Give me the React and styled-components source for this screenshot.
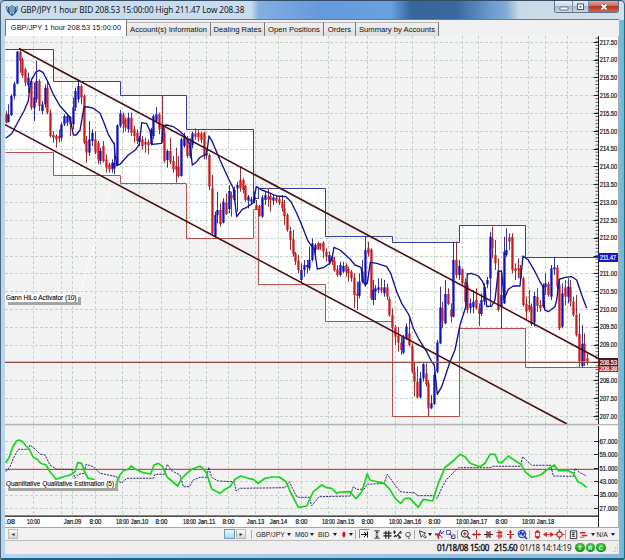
import React from "react";
import styled, { createGlobalStyle } from "styled-components";

// Candle groups. Values are thirds of a pixel from the group origin:
// b/r (up/down), high, body top, body bottom, low
const CANDLES = [
  {
    x: 5.7, y: 36,
    rows: `r 225 235 260 262,b 205 235 258 260,b 175 180 237 240,b 137 143 180 190,b 45 47 143 145,r 37 47 75 110,r 65 70 118 125,r 95 100 140 150,b 110 125 148 170,r 130 135 215 222,b 140 185 215 255,b 75 135 190 200,r 130 135 210 225,b 195 205 225 235,b 145 155 205 215,r 135 155 230 235,r 220 230 300 305,r 285 297 305 320,r 295 300 310 335,r 280 300 308 320,b 260 265 305 315,b 235 240 265 270,b 235 240 260 270,r 240 243 265 300,b 185 215 265 280,b 155 165 215 225,b 130 150 190 200,r 145 150 185 205,r 175 180 320 325,r 300 315 350 380,b 255 310 350 360,b 280 290 315 330,r 285 310 350 355,r 315 320 370 385,b 335 345 375 385,r 315 330 375 380,r 355 370 395 410,r 380 385 400 410,b 370 380 400 410,b 320 380 397 415,b 265 268 387 390,b 222 232 270 275,r 230 235 265 290,r 245 250 275 285,b 230 245 280 290,r 230 245 290 300,r 270 280 300 320,r 280 290 315 325,b 300 305 318 330,r 300 310 330 340,r 305 318 326 350,r 310 318 328 355,b 275 280 325 328,b 235 240 300 310,b 213 235 255 262,r 230 235 280 295,r 180 265 315 320,r 275 290 375 380,b 340 345 372 395,r 305 345 378 385,r 360 375 400 410,r 335 390 402 440,r 360 392 420 425,b 305 310 420 422,b 290 300 330 335,r 300 308 360 365`,
  },
  {
    x: 189.6, y: 100,
    rows: `b 115 135 168 175,b 95 100 135 145,r 85 100 110 118,r 88 98 112 125,r 95 100 120 130,r 95 97 165 178,b 150 160 167 178,r 160 165 260 270,r 225 265 400 405,b 335 345 408 415,b 275 330 345 370,r 310 330 372 380,b 295 305 368 370,r 280 308 342 345,b 255 273 327 340,r 275 285 295 350,b 260 270 300 305,b 245 255 265 335,r 200 240 265 275,r 235 240 270 280,r 255 258 300 305,b 285 290 302 325,b 290 298 305 315,b 275 290 302 310,r 300 315 328 330,r 315 318 348 350,b 285 292 350 353,b 275 285 300 315,r 265 290 298 320,r 280 288 300 335,b 285 292 302 315,r 285 293 303 308,r 290 298 308 315,r 285 305 325 335,r 300 325 348 375,r 340 345 390 395,r 380 393 420 450,r 390 418 462 470,r 455 460 485 495,r 465 482 510 520,b 490 510 540 550,b 480 495 510 530,b 480 495 502 520,b 440 480 505 512,b 415 430 480 485,b 430 435 450 475,r 425 430 448 450,r 430 430 440 450,r 423 428 455 475,r 445 455 470 485,b 455 465 485 495,r 465 470 485 495,r 470 482 512 515,r 495 508 525 530,b 485 495 525 530,b 485 498 515 520,r 490 495 515 530,r 500 507 520 545,r 510 515 535 545,r 520 532 585 625,r 545 580 588 630,b 520 545 587 595,b 480 515 545 550,b 410 450 550 560,r 425 445 460 470,r 445 448 595 600`,
  },
  {
    x: 372.7, y: 200,
    rows: `b 240 270 300 315,b 255 265 275 300,b 235 262 270 280,r 235 262 272 280,b 240 262 280 290,r 250 262 290 300,r 290 297 345 350,r 325 345 383 395,r 375 382 410 435,r 380 408 428 455,r 410 428 450 465,b 405 412 458 462,b 370 380 415 420,r 355 400 435 440,r 430 438 515 520,r 485 515 545 590,r 500 545 592 595,b 515 535 592 595,b 490 492 535 545,r 490 520 552 560,r 540 550 625 650,b 585 610 625 627,b 515 525 612 615,b 420 427 515 520,b 260 322 430 432,r 305 325 362 385,b 240 282 370 372,r 265 282 312 315,r 310 330 350 368,b 125 180 350 352,r 125 180 225 235,b 180 198 225 240,r 205 208 250 255,r 235 245 305 325,r 245 255 330 340,b 295 310 325 340,b 270 305 322 340,r 265 300 325 328,r 310 325 342 378,b 280 300 342 348,b 250 260 305 315,b 230 240 253 265,b 95 110 235 320,r 80 115 145 175,r 120 165 190 210,r 175 215 330 335,b 210 285 320 385,b 110 155 310 312,b 85 150 165 170,r 100 112 125 150,r 100 110 210 220,r 190 205 213 240,r 175 205 210 235,r 195 205 235 245,r 230 235 315 320,r 290 312 335 360,r 270 315 330 335,r 310 320 372 378,b 275 288 368 380,r 265 290 318 335,r 300 315 325 335,b 250 258 320 325,b 220 250 262 285,r 245 252 285 290,b 195 205 290 300,b 170 202 208 225,r 195 203 260 270,r 235 255 385 390,b 250 280 380 385,r 240 262 290 315,b 235 260 290 310,r 240 262 305 320,r 290 305 345 350,r 285 345 405 410,r 340 402 485 500,b 375 432 498 502,r 400 430 485 498,r 460 475 487 495`,
  },
];

const HILO = [
  [0, 36, "17,307 35,293 50,265 72,225 85,195 90,150 95,130 108,108 118,103 130,110 145,140 160,175 180,210 207,240 214,265 220,297 228,297 240,283 252,213 265,213 280,217 300,232 310,255 325,295 343,325 345,355 350,388 360,385 385,357 405,343 418,325 425,260 440,263 450,285 457,325 485,322 490,270 500,267 520,272 535,282 555,300 570,325"],
  [180, 100, "30,135 37,195 50,185 60,172 80,162 87,108 97,125 120,180 145,235 160,265 170,350 187,328 200,322 220,308 229,260 245,270 265,277 290,288 318,290 333,305 350,340 365,375 385,425 403,448 408,480 412,507 430,503 450,490 458,465 462,442 480,450 510,477 525,495 543,502 550,545 556,556 562,550 571,487"],
  [340, 200, "91,187 110,190 140,200 152,220 170,275 185,310 207,345 220,385 235,415 260,455 275,485 283,495 292,583 305,560 330,485 345,450 360,375 378,318 382,222 395,220 415,228 428,245 435,265 440,320 455,318 465,300 475,212 485,215 492,298 505,268 520,258 540,258 549,168 565,180 585,215 600,245 610,262 614,330 625,335 645,320 650,300 658,238 675,232 695,230 710,240 725,285 740,325"],
];

const QQE = [
  [0, 420, "17,128 28,112 38,80 50,62 58,60 68,65 78,78 88,88 100,112 112,118 122,130 138,135 150,155 168,178 185,172 210,165 225,155 233,128 245,130 255,158 265,175 277,177 300,190 320,205 340,205 350,190 360,165 370,152 385,148 393,138 405,147 430,158 452,162 462,135 475,130 488,140 500,170 515,183 533,198 545,175 560,160 575,148 600,139"],
  [200, 420, "0,139 8,145 20,160 35,207 60,220 75,208 90,200 105,178 122,168 145,175 160,178 175,190 195,175 215,171 238,171 258,185 270,213 295,262 320,258 340,215 365,195 380,203 395,205 410,220 420,216 450,215 468,236 485,215 502,162 510,180 530,185 552,190 570,208 585,235 602,250 615,235"],
  [410, 420, "0,235 25,262 40,238 68,243 85,190 105,142 125,127 150,103 165,110 180,130 210,140 225,130 240,103 255,103 265,127 275,128 295,108 320,125 333,133 345,155 365,172 392,165 410,150 433,135 445,152 475,152 490,160 505,187 515,190 530,202"],
];

const QQE_SIGNAL = [
  [0, 420, "17,155 30,140 40,115 55,88 85,88 90,75 103,85 120,102 135,105 150,135 170,148 215,148 225,175 235,163 252,160 258,133 280,140 300,160 350,170 355,185 365,188 380,175 460,175 465,163 493,163 502,133 515,152 540,165 550,200 568,200 580,180"],
  [200, 420, "0,172 20,172 26,142 35,172 55,183 103,185 108,213 120,205 255,203 268,185 280,210 292,232 328,232 335,257 357,230 450,228 460,200 470,208 492,208 502,193 553,190 562,163 585,195 600,215"],
  [410, 420, "0,218 15,218 22,227 70,227 82,235 95,205 108,180 120,168 145,143 240,143 250,139 330,139 338,110 365,136 422,136 430,168 490,169 496,145 510,158 530,168"],
];

const TIMES = [
  [5, ".08"], [33, "10:00"], [61, ""], [72, "Jan.09"], [95, "8:00"], [122, "18:00"],
  [139, "Jan.10"], [161, "8:00"], [189, "18:00"], [206, "Jan.11"], [228, "8:00"],
  [255, "Jan.13"], [278, "Jan.14"], [301, "8:00"], [328, "18:00"], [345, "Jan.15"],
  [367, "8:00"], [395, "18:00"], [412, "Jan.16"], [434, "8:00"], [462, "18:00"],
  [478, "Jan.17"], [501, "8:00"], [528, "18:00"], [545, "Jan.18"], [567, ""],
];

const HIGHS = "5.5,49.5 53.5,49.5 53.5,81.5 120.5,81.5 120.5,95.5 186.5,95.5 186.5,129.5 253.5,129.5 253.5,198.5 258.5,198.5 258.5,188.5 325.5,188.5 325.5,236.5 392.5,236.5 392.5,242.5 459.5,242.5 459.5,225.5 525.5,225.5 525.5,257.5 598,257.5";
const LOWS = "5.5,152.5 53.5,152.5 53.5,175.5 120.5,175.5 120.5,183.5 186.5,183.5 186.5,238.5 253.5,238.5 253.5,209.5 258.5,209.5 258.5,284.5 325.5,284.5 325.5,321.5 392.5,321.5 392.5,416.5 459.5,416.5 459.5,328.5 525.5,328.5 525.5,367.5 598,367.5";

const priceY = (p) => 41.8 + (217.5 - p) * 35.62;
const toPoints = (parts) =>
  parts
    .map(([x0, y0, list]) =>
      list
        .split(" ")
        .map((pair) => {
          const [x, y] = pair.split(",").map(Number);
          return `${(x0 + x / 3).toFixed(1)},${(y0 + y / 3).toFixed(1)}`;
        })
        .join(" ")
    )
    .join(" ");

function Candles() {
  return CANDLES.map((group) =>
    group.rows.split(",").map((row, i) => {
      const [kind, ...nums] = row.split(" ");
      const [hi, top, bottom, lo] = nums.map((n) => group.y + Number(n) / 3);
      const x = Math.round(group.x + i * 2.785);
      const up = kind === "b";
      return (
        <g key={group.x + "-" + i}>
          <rect x={x} y={hi} width="1" height={lo - hi} fill={up ? "#33339a" : "#8c3030"} />
          <rect
            x={x - 0.7}
            y={top}
            width="2.3"
            height={Math.max(bottom - top, 1)}
            fill={up ? "#1212bc" : "#cc1a20"}
          />
        </g>
      );
    })
  );
}

function PriceChart() {
  const prices = Array.from({ length: 22 }, (_, i) => 217.5 - i * 0.5);
  const minor = Array.from({ length: 108 }, (_, i) => 38.2 + i * 3.562);
  const levels = [67, 59, 51, 43, 35, 27];
  return (
    <ChartSvg viewBox="5 36 614 491" width="614" height="491">
      <rect x="5" y="36" width="614" height="491" fill="#f1f2f1" />
      <polygon points={HIGHS + " " + LOWS.split(" ").reverse().join(" ")} fill="#fff" />
      <g stroke="#c2d4c3" strokeWidth="1" strokeDasharray="3 2">
        {prices.map((p) => (
          <line
            key={p}
            x1="5"
            x2={p === 211.5 ? 525 : 598}
            y1={Math.round(priceY(p)) + 0.5}
            y2={Math.round(priceY(p)) + 0.5}
          />
        ))}
        {TIMES.slice(1).map(([x]) => (
          <line key={x} x1={x + 0.5} x2={x + 0.5} y1="36" y2="514" />
        ))}
        {levels.map((l, i) =>
          l === 51 ? null : (
            <line key={l} x1="5" x2="598" y1={Math.round(441 + i * 13.4) + 0.5} y2={Math.round(441 + i * 13.4) + 0.5} />
          )
        )}
      </g>
      <path d="M111,184L92,254M93,247L80,294" stroke="#fff" strokeWidth=".7" />
      <polyline points={HIGHS} fill="none" stroke="#34419c" />
      <polyline points={LOWS} fill="none" stroke="#b4504e" />
      <Candles />
      <polyline points={toPoints(HILO)} fill="none" stroke="#101094" strokeWidth="1.35" strokeLinejoin="round" />
      <rect x="5" y="362" width="593" height="1" fill="#8a4a40" />
      <rect x="5" y="361" width="593" height="1" fill="#b99a66" opacity=".5" />
      <path d="M19,48.5L598,358.3M5,124.7L567,424" stroke="#4a0d10" strokeWidth="1.6" />

      {/* oscillator pane */}
      <rect x="5" y="423.8" width="614" height="1.6" fill="#b4b4b4" />
      <rect x="5" y="469" width="593" height="1" fill="#cc4a4e" />
      <rect x="5" y="468" width="593" height="1" fill="#e3a3a3" opacity=".5" />
      <polyline points={toPoints(QQE_SIGNAL)} fill="none" stroke="#25256e" strokeWidth=".95" strokeDasharray="2.2 1" />
      <polyline points={toPoints(QQE)} fill="none" stroke="#16d61c" strokeWidth="1.7" strokeLinejoin="round" />

      {/* axes */}
      <rect x="598" y="38" width="20" height="386" fill="#fff" />
      <rect x="598" y="425.5" width="20" height="90" fill="#fff" />
      <rect x="5" y="515" width="613" height="12" fill="#fff" />
      <path d="M598.5,36V424M598.5,426V527" stroke="#222" />
      <path d="M5,516.2H598" stroke="#111" strokeWidth="1.3" />
      {minor.map((y) => (
        <line key={y} x1="595.5" x2="598" y1={y} y2={y} stroke="#333" strokeWidth=".8" />
      ))}
      {prices.map((p) => (
        <g key={p}>
          <path d={`M593.5,${Math.round(priceY(p)) + 0.5}H598`} stroke="#222" />
          {p !== 211.5 && p !== 208.5 && (
            <AxisText x="599.8" y={priceY(p) + 2.7} textLength="17.4">{p.toFixed(2)}</AxisText>
          )}
        </g>
      ))}
      {levels.map((l, i) => (
        <g key={l}>
          <path d={`M594,${Math.round(441 + i * 13.4) + 0.5}H598`} stroke="#222" />
          <AxisText x="599.5" y={443.8 + i * 13.4} textLength="18">{l.toFixed(3)}</AxisText>
        </g>
      ))}
      {TIMES.map(([x, label]) => {
        if (!label) return null;
        const w = { 3: 10, 4: 12, 5: 13, 6: 17.5 }[label.length];
        return (
          <AxisText key={x} x={x === 5 ? 5 : x + 0.5 - w / 2} y="524.2" textLength={w}>
            {label}
          </AxisText>
        );
      })}
      <rect x="598" y="253" width="20" height="9" fill="#1717c4" />
      <AxisText x="600" y="260.2" textLength="16" $light>211.47</AxisText>
      <rect x="598" y="364" width="20" height="8" fill="#c41c20" />
      <AxisText x="599.8" y="371.2" textLength="17.4" $light>208.38</AxisText>
      <rect x="598" y="358" width="20" height="8.3" fill="#5c1414" />
      <AxisText x="599.8" y="364.9" textLength="17.4" $light>208.53</AxisText>
      <path d="M618.5,36V527" stroke="#aab0b4" />
    </ChartSvg>
  );
}

const icons = {
  shift: (
    <g stroke="#222" fill="none">
      <path d="M.5,9.500V.5H10.500" stroke="#888" />
      <path d="M10.5,.5V10M0,9.900H11" stroke="#fff" />
      <path d="M2,5.500H7.500M5,3L7.500,5.500L5,8M8.500,2.500V8.500" />
    </g>
  ),
  range: <path d="M2.500,1.500H8.500M2.500,9.500H8.500M5.500,2V9M4,4L5.500,2.500L7,4M4,7L5.500,8.500L7,7" stroke="#222" fill="none" />,
  grid: <path d="M4,1.500V10M7,1.500V10M1.500,4H10M1.500,7H10" stroke="#222" strokeWidth="1.2" />,
  percent: <path d="M1,3H4M2.500,1.500V5M4,8L9,2M6,6L9,9M2,8L4,6M7,4H10M6,9H8" stroke="#222" strokeWidth="1.1" />,
  lens: (
    <g fill="none" stroke="#222">
      <circle cx="4.800" cy="4.800" r="3.500" />
      <path d="M7.500,7.500L10,10" strokeWidth="1.6" />
      <path d="M3,4.800H6.600M4.800,3V6.600" stroke="#b02020" />
    </g>
  ),
  cursor: <path d="M1.500,1.500L3.500,8.500L5,6.500L8,9.500L9.200,8.300L6.300,5.300L8.500,4Z" fill="#fff" stroke="#222" />,
  trend: (
    <g fill="none">
      <path d="M5,5L6.500,1.500L7.500,5L10,2M8.500,9L5,5" stroke="#2638bb" />
      <path d="M2,4V6M1,5.500H4M4.500,4V10M3,7L6,6" stroke="#c02a32" strokeWidth="1.4" />
    </g>
  ),
  shapes: (
    <g fill="none">
      <path d="M1.500,1.500H5.500V5.500H1.500Z" stroke="#5865c8" />
      <path d="M4,4L8,8" stroke="#b52d3a" />
      <path d="M6.500,6H10V9.500H6.500Z" stroke="#334bc5" />
    </g>
  ),
  crossA: <path d="M5.500,1V10M1,5.500H10M3,4V7M8,4V7" stroke="#b93230" strokeWidth="1.1" />,
  crossB: (
    <g strokeWidth="1.2">
      <path d="M1,5.500H10M4,2V9M7,2V9" stroke="#333" />
      <path d="M5.500,3V8" stroke="#b93230" />
    </g>
  ),
  crossC: <path d="M2.500,3.500H8.500M2.500,7H8.500M5,1V10M7,2V9" stroke="#c52b2a" strokeWidth="1.2" />,
  crossD: <path d="M5.500,1V10M2,5.500H9M4,3H7M4,8H7" stroke="#c52b2a" strokeWidth="1.2" />,
  find: (
    <g>
      <circle cx="5" cy="5" r="3.800" fill="#c8d4ff" stroke="#1d329e" />
      <path d="M2.500,6L4,3L6,6L7.500,3M7.500,7.500L10,10" fill="none" stroke="#1633cc" strokeWidth="1.5" />
    </g>
  ),
  vertical: <path d="M5.500,1L8,3.500H3ZM5.500,10L3,7.500H8ZM3.500,3.500V7.500M7.500,3.500V7.500" fill="#cf2726" stroke="#cf2726" strokeWidth=".8" />,
  horizontal: <path d="M.5,5.500L3.500,3.500V7.500ZM10.500,5.500L7.500,3.500V7.500ZM3,5.500H8" fill="#cf2726" stroke="#cf2726" strokeWidth=".8" />,
  expand: (
    <g fill="none" stroke="#cf2726" strokeWidth="1.1">
      <circle cx="5.500" cy="5.500" r="2.600" />
      <path d="M5.500,.5V3M5.500,8V10.500M.5,5.500H3M8,5.500H10.500" />
    </g>
  ),
  report: (
    <g fill="none" stroke="#222">
      <path d="M1.500,1.500H8.500V10H1.500Z" fill="#fff" />
      <path d="M3,3.500H7M3,5.500H6.500M3,7.500H7M4.500,3V8" strokeWidth=".8" />
    </g>
  ),
  layers: (
    <g>
      <path d="M1,3.500H7M3,6.500H9" stroke="#d02222" strokeWidth="1.7" />
      <path d="M1,8.500H6" stroke="#608360" />
    </g>
  ),
  candle: <path d="M2.500,3H5.500V8H2.500ZM4,1V10" fill="#d9141b" stroke="#c90d12" strokeWidth=".9" />,
};

function Icon({ name, slot = 11 }) {
  return (
    <IconSlot $w={slot}>
      <svg width="11" height="11" viewBox="0 0 11 11">{icons[name]}</svg>
    </IconSlot>
  );
}

function App() {
  return (
    <Window>
      <GlobalStyle />
      <TitleBar>
        <svg width="12" height="12" viewBox="0 0 12 12">
          <circle cx="6" cy="6" r="5.300" fill="#d6e5f0" />
          <path d="M1,2Q0,6 3,9L6,11.500L9,9Q12,6 11,2M4,2V8M6,1V11M8,2V8M2.500,3V7L4,9M9.500,3V7L8,9" fill="none" stroke="#235f91" strokeWidth="1.100" />
        </svg>
        <Title>GBP/JPY 1 hour BID 208.53 15:00:00 High 211.47 Low 208.38</Title>
        <WindowButtons>
          <WindowButton $w={18}>
            <svg width="10" height="8"><rect x="1" y="4" width="8" height="3" rx=".5" fill="#fff" stroke="#4d586b" strokeWidth=".8" /></svg>
          </WindowButton>
          <WindowButton $w={16}>
            <svg width="9" height="8"><rect x="1.500" y="1" width="6" height="5.500" fill="#fff" stroke="#4d586b" /><rect x="3.500" y="3" width="2" height="1.500" fill="#4d586b" /></svg>
          </WindowButton>
          <WindowButton $w={29} $close>
            <svg width="10" height="8"><path d="M2.500,1.500L7.500,6.500M7.500,1.500L2.500,6.500" stroke="#6b3434" strokeWidth="3" /><path d="M2.500,1.500L7.500,6.500M7.500,1.500L2.500,6.500" stroke="#fff" strokeWidth="1.800" /></svg>
          </WindowButton>
        </WindowButtons>
      </TitleBar>

      <Client>
        <Tabs>
          <Tab $w={121} $active>GBP/JPY 1 hour 208.53 15:00:00</Tab>
          <Tab $w={84}>Account(s) Information</Tab>
          <Tab $w={54}>Dealing Rates</Tab>
          <Tab $w={59}>Open Positions</Tab>
          <Tab $w={32}>Orders</Tab>
          <Tab $w={83}>Summary by Accounts</Tab>
        </Tabs>

        <ChartArea>
          <PriceChart />
          <StudyLabel $top={257.5} $w={73}>Gann HiLo Activator (10)</StudyLabel>
          <StudyLabel $top={443.5} $w={110}>Quantitative Qualitative Estimation (5)</StudyLabel>
        </ChartArea>

        <Toolbar>
          <ScrollTrack>
            <ScrollButton>◂</ScrollButton>
            <ScrollThumb />
            <ScrollButton>▸</ScrollButton>
          </ScrollTrack>
          <Separator $gap={4} />
          <Picker $w={39}>GBP/JPY</Picker>
          <Picker $w={23}>M60</Picker>
          <Picker $w={23}>BID</Picker>
          <Picker $w={14}><Icon name="candle" slot={8} /></Picker>
          <Separator />
          <Icon name="shift" slot={13} />
          <Icon name="range" slot={10} />
          <Icon name="grid" slot={10.5} />
          <Icon name="percent" slot={13} />
          <IconLetter>Q</IconLetter>
          <Separator />
          <Picker $w={16}><Icon name="cursor" slot={10} /></Picker>
          <Icon name="trend" slot={11.5} />
          <Icon name="shapes" slot={11.5} />
          <Separator />
          <Icon name="lens" slot={11} />
          <Icon name="crossA" slot={11.5} />
          <Icon name="crossB" slot={11} />
          <Icon name="crossC" slot={11} />
          <Icon name="crossD" slot={12} />
          <Icon name="find" slot={12} />
          <Separator />
          <Icon name="vertical" slot={11} />
          <Icon name="horizontal" slot={11} />
          <Icon name="expand" slot={11} />
          <Separator />
          <Icon name="report" slot={10} />
          <Picker $w={18} $tight><Icon name="layers" slot={10} /></Picker>
          <Picker $w={20} $tight>N/A</Picker>
        </Toolbar>

        <StatusBar>
          <StatusText $w={57} $bold>01/18/08 15:00</StatusText>
          <StatusText $w={26} $bold>215.60</StatusText>
          <StatusText $w={55}>01/18 14:14:19</StatusText>
          <Light>T</Light>
          <Light>R</Light>
          <Light>C</Light>
          <Grip width="8" height="10" viewBox="0 0 8 10">
            <path d="M6,2h1M4,5h1M6,5h1M2,8h1M4,8h1M6,8h1" stroke="#aaa" />
          </Grip>
        </StatusBar>
      </Client>
    </Window>
  );
}

export default App;

const GlobalStyle = createGlobalStyle`
  body {
    margin: 0;
    overflow: hidden;
    background: #8eb5d9;
  }
`;

const Window = styled.div`
  box-sizing: border-box;
  width: 625px;
  height: 560px;
  padding: 0 5px 5px 4px;
  display: flex;
  flex-direction: column;
  font-family: "Liberation Sans", Arial, sans-serif;
  border-left: 1px solid #526477;
  border-right: 1px solid #23687f;
  border-top: 1px solid #344c65;
  border-bottom: 2px solid #176583;
  border-radius: 5px 5px 2px 2px;
  background:
    linear-gradient(to right, #c9dcee 0 250px, #83afe2 258px, #6499dc 320px, #6aa0df 390px, #35679d 410px, #38699f 455px, #6a9bcf 490px, #83abd3 505px, #cad9e6 518px, #d3e1ed 100%) 0 0 / 100% 19px no-repeat,
    linear-gradient(to right, #b7d6ef, #a6c8eb 50%, #8db7da 99%, #62bed9);
`;

const TitleBar = styled.div`
  height: 18px;
  flex: none;
  display: flex;
  align-items: center;
  padding-left: 1px;
`;

const Title = styled.div`
  font-family: "Noto Sans", "Open Sans", sans-serif;
  font-size: 8.2px;
  line-height: 14px;
  margin-left: 2.5px;
  color: #101820;
  white-space: nowrap;
  width: 228px;
  letter-spacing: -0.12px;
`;

const WindowButtons = styled.div`
  display: flex;
  align-self: flex-start;
  margin-left: auto;
  height: 11px;
  border: 1px solid #5f7288;
  border-top: 0;
  border-radius: 0 0 3px 3px;
  overflow: hidden;
`;

const WindowButton = styled.div`
  width: ${(p) => p.$w}px;
  box-sizing: border-box;
  display: flex;
  align-items: center;
  justify-content: center;
  border-right: ${(p) => (p.$close ? "0" : "1px solid #7a8ca0")};
  background: ${(p) =>
    p.$close
      ? "linear-gradient(#e0a79a, #d1685a 45%, #b93422 50%, #d3654c)"
      : "linear-gradient(#e4edf5, #cbd9e6 45%, #a6b9cd 50%, #c8d8e8)"};
`;

const Client = styled.div`
  flex: 1;
  min-height: 0;
  display: flex;
  flex-direction: column;
  background: #f0efee;
`;

const Tabs = styled.div`
  box-sizing: border-box;
  height: 17px;
  flex: none;
  display: flex;
  align-items: flex-end;
  border-top: 1px solid #707982;
  border-left: 1px solid #6f7983;
  background: #f0f0f0;
`;

const Tab = styled.div`
  box-sizing: border-box;
  width: ${(p) => p.$w}px;
  height: ${(p) => (p.$active ? 16 : 14)}px;
  line-height: ${(p) => (p.$active ? 15 : 13)}px;
  font-size: ${(p) => (p.$active ? 7.45 : 7.65)}px;
  text-align: center;
  white-space: nowrap;
  color: #111;
  background: ${(p) => (p.$active ? "#fff" : "linear-gradient(#f0f0f0, #dedede)")};
  border-top: ${(p) => (p.$active ? "0" : "1px solid #b5b5b5")};
  border-right: 1px solid #777;
`;

const ChartArea = styled.div`
  position: relative;
  height: 491px;
  flex: none;
`;

const ChartSvg = styled.svg`
  display: block;
`;

const AxisText = styled.text.attrs({ lengthAdjust: "spacingAndGlyphs" })`
  font-family: "Liberation Sans Narrow", "Liberation Sans", Arial, sans-serif;
  font-size: 6.8px;
  fill: ${(p) => (p.$light ? "#fff" : "#111")};
  stroke: ${(p) => (p.$light ? "#fff" : "#111")};
  stroke-width: 0.2px;
`;

const StudyLabel = styled.div`
  position: absolute;
  left: 0;
  top: ${(p) => p.$top}px;
  width: ${(p) => p.$w - 1}px;
  padding-left: 1px;
  height: 8px;
  line-height: 8px;
  font-size: 6.45px;
  white-space: nowrap;
  color: #000;
  -webkit-text-stroke: 0.1px #000;
  background: #fff;
  box-shadow: 3px 3px 0 #a5a5a5;
`;

const Toolbar = styled.div`
  box-sizing: border-box;
  height: 14px;
  flex: none;
  display: flex;
  align-items: center;
  border-top: 1px solid #a6a6a6;
  border-bottom: 1px solid #bcbcbc;
  background: #f1f1f1;
`;

const ScrollTrack = styled.div`
  width: 246px;
  flex: none;
  box-sizing: border-box;
  padding: 0 5px 0 3px;
  display: flex;
  align-items: center;
`;

const ScrollButton = styled.div`
  box-sizing: border-box;
  width: 10px;
  height: 10px;
  border: 1px solid #bbb;
  background: linear-gradient(#fafafa, #d6d6d6);
  font-family: "DejaVu Sans", sans-serif;
  font-size: 6px;
  line-height: 7px;
  text-align: center;
  color: #333;
`;

const ScrollThumb = styled.div`
  box-sizing: border-box;
  width: 11px;
  height: 10px;
  margin: 0 1px 0 auto;
  border: 1px solid #6f9bb5;
  background: linear-gradient(#e5f5fd, #a9d8f0);
`;

const Separator = styled.div`
  width: 1px;
  height: 9px;
  flex: none;
  margin-right: ${(p) => p.$gap ?? 2.5}px;
  background: #aaa;
`;

const Picker = styled.div`
  width: ${(p) => p.$w}px;
  flex: none;
  display: flex;
  align-items: center;
  font-size: 6.8px;
  color: #222;
  box-sizing: border-box;
  padding-right: ${(p) => (p.$tight ? 2 : 4)}px;
  justify-content: space-between;

  &::after {
    content: "";
    border: 2px solid transparent;
    border-top: 3px solid #222;
    border-bottom: 0;
  }
`;

const IconSlot = styled.div`
  width: ${(p) => p.$w}px;
  flex: none;
  display: flex;
`;

const IconLetter = styled.div`
  width: 9px;
  flex: none;
  font-size: 7.5px;
  color: #222;
`;

const StatusBar = styled.div`
  height: 13px;
  flex: none;
  display: flex;
  align-items: center;
  padding-left: 432px;
  background: #f0edec;
`;

const StatusText = styled.div`
  width: ${(p) => p.$w}px;
  flex: none;
  font-family: "Noto Sans", sans-serif;
  font-size: 8px;
  letter-spacing: -0.28px;
  line-height: 12px;
  white-space: nowrap;
  color: #151515;
  -webkit-text-stroke: ${(p) => (p.$bold ? "0.35px #111" : "0")};
`;

const Light = styled.div`
  width: 9.5px;
  height: 9.5px;
  margin-right: 1px;
  border-radius: 50%;
  flex: none;
  text-align: center;
  font-size: 6px;
  font-weight: bold;
  line-height: 10px;
  color: #dfffd8;
  background: radial-gradient(circle at 50% 30%, #60d858, #14961a 70%, #0f7a16);
`;

const Grip = styled.svg`
  margin-left: auto;
`;
